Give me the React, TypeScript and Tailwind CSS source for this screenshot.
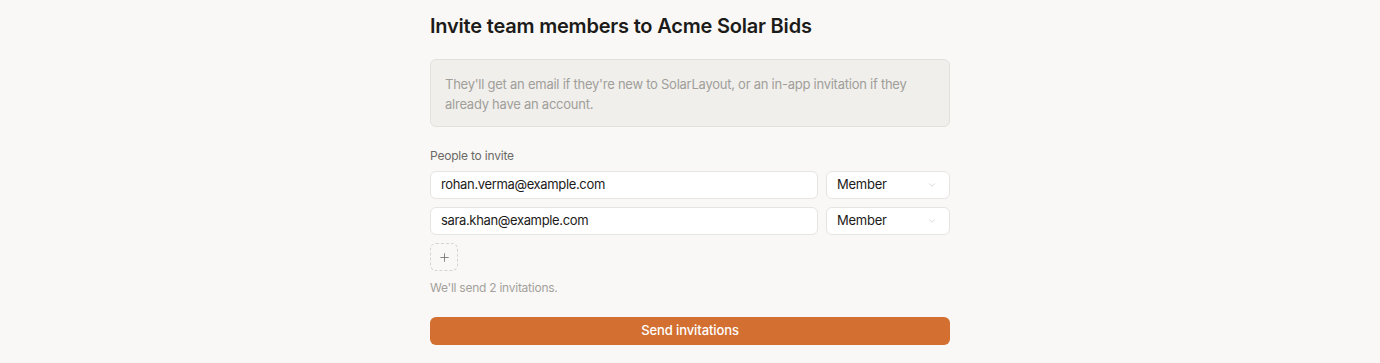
import { ChevronDown, Plus } from "lucide-react";

const invitees = [
  { email: "rohan.verma@example.com", role: "Member" },
  { email: "sara.khan@example.com", role: "Member" },
];

function InviteRow({ email, role }: { email: string; role: string }) {
  return (
    <div className="flex gap-2">
      <div className="flex h-7 flex-1 items-center rounded-md border border-[#e7e5e1] bg-white px-[10px] text-[13px] tracking-[-0.35px] text-[#1c1b19]">
        {email}
      </div>
      <div className="flex h-7 w-[124px] items-center justify-between rounded-md border border-[#e7e5e1] bg-white pl-[10px] pr-[12px] text-[13px] tracking-[-0.25px] text-[#1c1b19]">
        <span>{role}</span>
        <ChevronDown size={10} strokeWidth={1.5} className="text-[#c2c0bb]" />
      </div>
    </div>
  );
}

export default function App() {
  return (
    <div
      className="min-h-[363px] bg-[#f9f8f6]"
      style={{ fontFamily: "Inter, 'Noto Sans', sans-serif" }}
    >
      <div className="mx-auto w-[520px] pt-3">
        {/* Header */}
        <h1 className="text-[20px] leading-7 font-semibold tracking-[-0.2px] text-[#1c1b19]">
          Invite team members to Acme Solar Bids
        </h1>

        {/* Info note */}
        <div className="mt-[19px] rounded-md border border-[#e3e1dc] bg-[#f0efec] px-[14px] pt-[14px] pb-[12px] text-[13px] leading-5 tracking-[-0.25px] text-[#a09e99]">
          They'll get an email if they're new to SolarLayout, or an in-app invitation if they
          already have an account.
        </div>

        {/* People */}
        <p className="mt-[21px] text-[12px] leading-4 tracking-[-0.2px] text-[#6b6965]">People to invite</p>
        <div className="mt-[7px] flex flex-col gap-2">
          {invitees.map((p) => (
            <InviteRow key={p.email} email={p.email} role={p.role} />
          ))}
        </div>

        <button className="mt-2 flex h-7 w-7 items-center justify-center rounded-md border border-dashed border-[#d6d4cf] text-[#6f6d68]">
          <Plus size={13} strokeWidth={1.5} />
        </button>

        <p className="mt-[9px] text-[12px] leading-4 tracking-[-0.25px] text-[#a3a19c]">We'll send 2 invitations.</p>

        <button className="mt-[21px] flex h-7 w-full items-center justify-center rounded-md bg-[#d26f31] text-[13px] font-medium tracking-[-0.1px] text-white">
          Send invitations
        </button>
      </div>
    </div>
  );
}
